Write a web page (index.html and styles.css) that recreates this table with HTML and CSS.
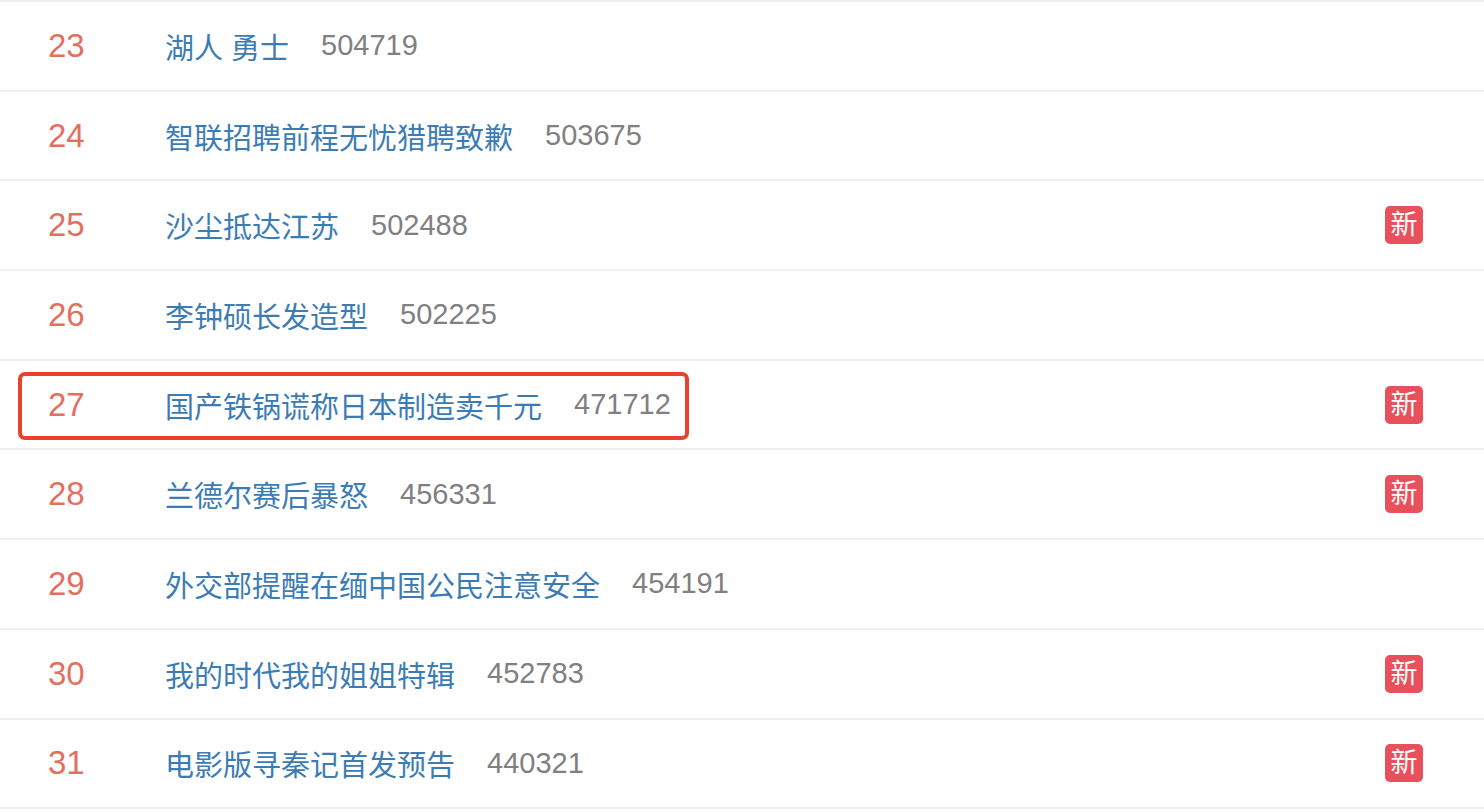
FILE: index.html
```html
<!DOCTYPE html>
<html lang="zh-CN">
<head>
<meta charset="UTF-8">
<meta name="viewport" content="width=device-width, initial-scale=1.0">
<title>热搜榜</title>
<link rel="stylesheet" href="styles.css">
</head>
<body>

<ul class="rank-list">
    <li class="rank-item">
        <span class="rank">23</span>
        <span class="title">湖人 勇士</span>
        <span class="count">504719</span>
    </li>
    <li class="rank-item">
        <span class="rank">24</span>
        <span class="title">智联招聘前程无忧猎聘致歉</span>
        <span class="count">503675</span>
    </li>
    <li class="rank-item">
        <span class="rank">25</span>
        <span class="title">沙尘抵达江苏</span>
        <span class="count">502488</span>
        <span class="badge">新</span>
    </li>
    <li class="rank-item">
        <span class="rank">26</span>
        <span class="title">李钟硕长发造型</span>
        <span class="count">502225</span>
    </li>
    <li class="rank-item">
        <span class="rank">27</span>
        <span class="title">国产铁锅谎称日本制造卖千元</span>
        <span class="count">471712</span>
        <span class="badge">新</span>
        <div class="highlight"></div>
    </li>
    <li class="rank-item">
        <span class="rank">28</span>
        <span class="title">兰德尔赛后暴怒</span>
        <span class="count">456331</span>
        <span class="badge">新</span>
    </li>
    <li class="rank-item">
        <span class="rank">29</span>
        <span class="title">外交部提醒在缅中国公民注意安全</span>
        <span class="count">454191</span>
    </li>
    <li class="rank-item">
        <span class="rank">30</span>
        <span class="title">我的时代我的姐姐特辑</span>
        <span class="count">452783</span>
        <span class="badge">新</span>
    </li>
    <li class="rank-item">
        <span class="rank">31</span>
        <span class="title">电影版寻秦记首发预告</span>
        <span class="count">440321</span>
        <span class="badge">新</span>
    </li>
</ul>

</body>
</html>
```

FILE: styles.css
```css
body {
    margin: 0;
    background-color: #fff;
    font-family: "Liberation Sans", "Noto Sans CJK SC", sans-serif;
}

.rank-list {
    list-style: none;
    margin: 0;
    padding: 0;
    border-bottom: 2px solid #f0f0f2;
}

.rank-item {
    position: relative;
    display: flex;
    align-items: center;
    height: 87.7px;
    border-top: 2px solid #f0f0f2;
    padding: 0 61px 0 48px;
}

.rank {
    width: 117px;
    font-size: 33px;
    color: #e2705f;
}

.title {
    font-size: 29px;
    color: #3c7cb4;
}

.count {
    margin-left: 32px;
    font-size: 29px;
    color: #808080;
}

/* "new" tag on the right */
.badge {
    margin-left: auto;
    width: 38px;
    height: 38px;
    border-radius: 5px;
    background-color: #e8505b;
    color: #fff;
    font-size: 27px;
    line-height: 38px;
    text-align: center;
}

/* red marker box over row 27 */
.highlight {
    position: absolute;
    left: 18px;
    top: 11px;
    width: 663px;
    height: 60px;
    border: 4px solid #e8412c;
    border-radius: 7px;
}
```
